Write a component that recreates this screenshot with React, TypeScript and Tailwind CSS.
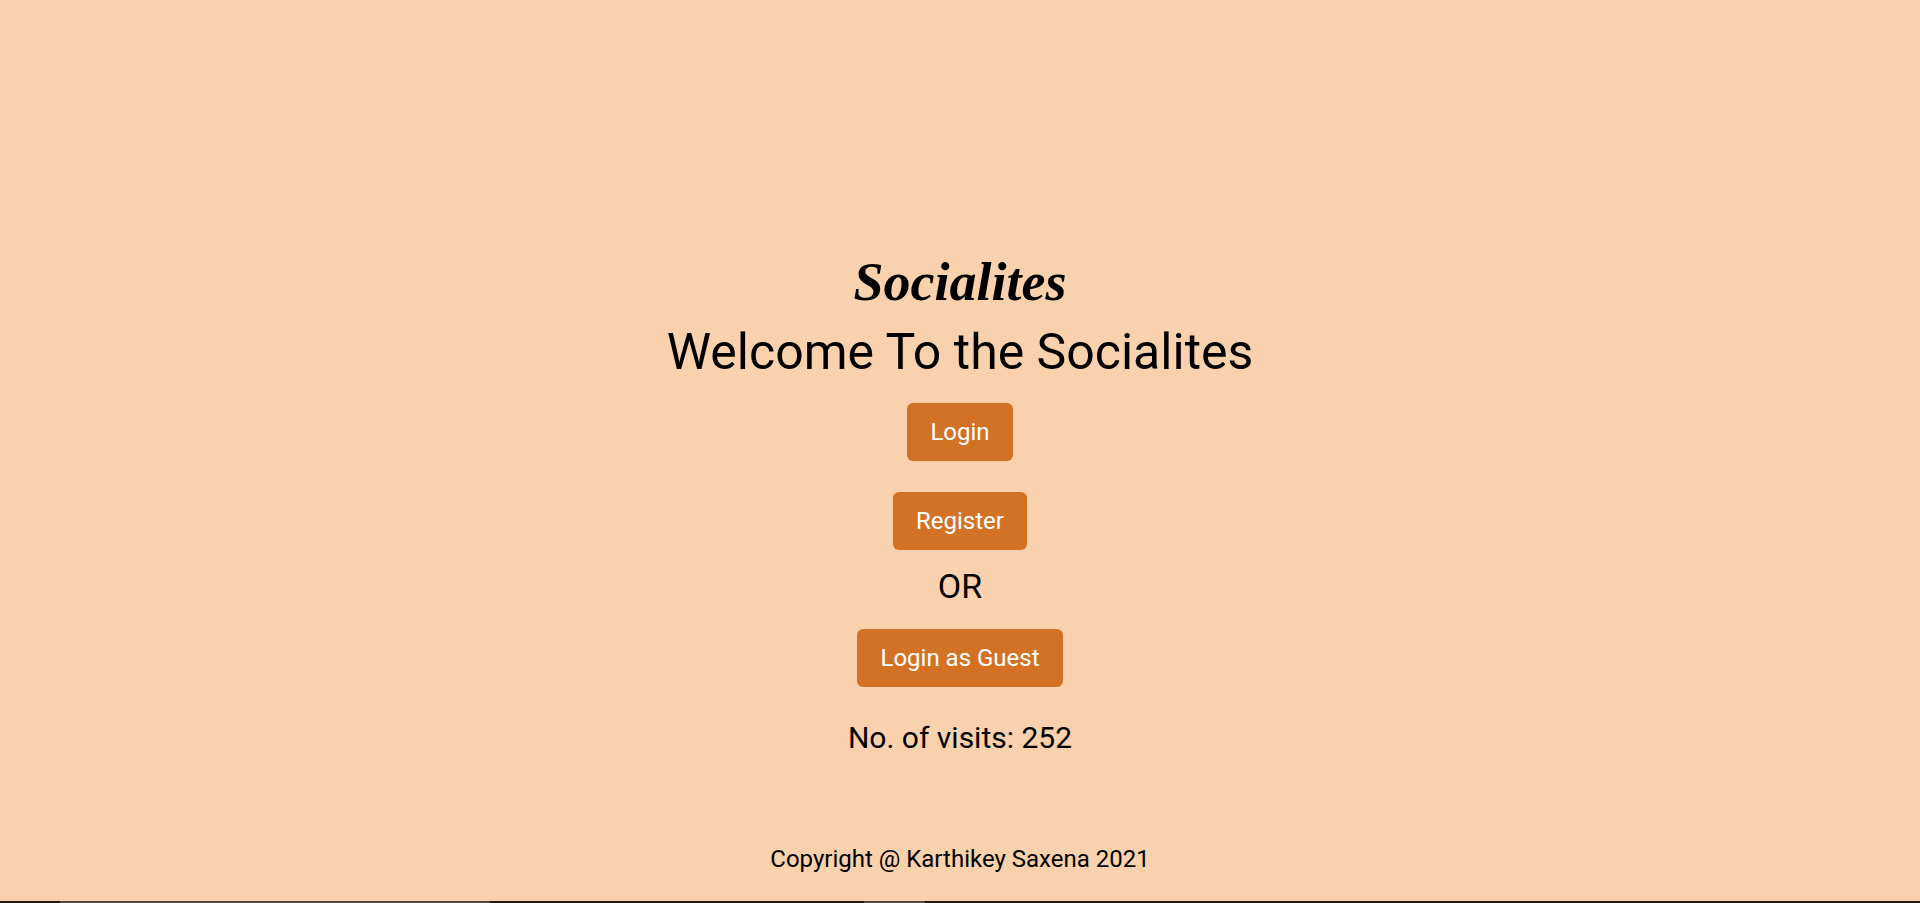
import React from 'react';

const roboto = { fontFamily: 'Roboto, "Noto Sans", sans-serif' };

type ActionButtonProps = {
    label: string;
    className?: string;
}

const ActionButton = ({label, className}: ActionButtonProps) => {
    return (
        <button className={"bg-[#d37225] text-white rounded-[6px] px-[23px] py-[11px] text-[24px] leading-[36px] " + (className ?? '')}>
            {label}
        </button>
    )
}

const App = () => {
    return (
        <div className="h-screen w-full flex flex-col bg-[#f9d1ac] text-black font-['Roboto',sans-serif]" style={roboto}>
            <main className="flex-1 flex flex-col items-center pt-[252px]">
                <h1 className="font-['Liberation_Serif',serif] italic font-bold text-[54px] leading-[60px]">Socialites</h1>
                <h2 className="mt-[11px] text-[50px] leading-[58px]">Welcome To the Socialites</h2>
                <ActionButton label="Login" className="mt-[22px]"/>
                <ActionButton label="Register" className="mt-[31px]"/>
                <p className="mt-[16px] text-[34px] leading-[40px]">OR</p>
                <ActionButton label="Login as Guest" className="mt-[23px]"/>
                <p className="mt-[33px] text-[30px] leading-[36px]">No. of visits: 252</p>
            </main>
            <footer className="text-center text-[24px] leading-[28px] pb-[28px]">
                Copyright @ Karthikey Saxena 2021
            </footer>
            <div className="h-[2px] flex bg-[#1c1c1c]">
                <div className="w-[60px]"/>
                <div className="w-[430px] bg-[#4a4a4a]"/>
                <div className="w-[374px]"/>
                <div className="w-[61px] bg-[#4a4a4a]"/>
            </div>
        </div>
    )
}

export default App;
